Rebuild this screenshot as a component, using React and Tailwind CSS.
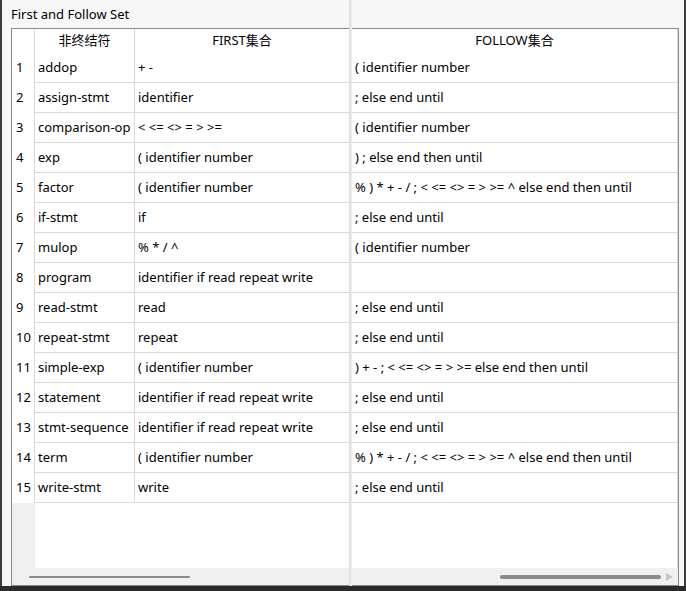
const rows = [
  ["addop", "+ -", "( identifier number"],
  ["assign-stmt", "identifier", "; else end until"],
  ["comparison-op", "< <= <> = > >=", "( identifier number"],
  ["exp", "( identifier number", ") ; else end then until"],
  ["factor", "( identifier number", "% ) * + - / ; < <= <> = > >= ^ else end then until"],
  ["if-stmt", "if", "; else end until"],
  ["mulop", "% * / ^", "( identifier number"],
  ["program", "identifier if read repeat write", ""],
  ["read-stmt", "read", "; else end until"],
  ["repeat-stmt", "repeat", "; else end until"],
  ["simple-exp", "( identifier number", ") + - ; < <= <> = > >= else end then until"],
  ["statement", "identifier if read repeat write", "; else end until"],
  ["stmt-sequence", "identifier if read repeat write", "; else end until"],
  ["term", "( identifier number", "% ) * + - / ; < <= <> = > >= ^ else end then until"],
  ["write-stmt", "write", "; else end until"],
];

export default function App() {
  return (
    <div
      className="w-[686px] h-[591px] bg-[#2b2b2b] flex flex-col overflow-hidden text-[13px] text-black"
      style={{ fontFamily: '"Noto Sans", "Noto Sans CJK SC", sans-serif' }}
    >
      <div className="flex h-[586px]">
        <div className="w-[2px] bg-[#3c3c3c]" />

        {/* Left window: first sets */}
        <div className="w-[347px] bg-[#f7f7f7] flex flex-col">
          <div className="h-[28px] pl-[9px] flex items-center leading-none">
            First and Follow Set
          </div>
          <div className="flex-1 ml-[9px] border-l border-t border-b border-[#8a8a8a] flex flex-col bg-white min-h-0">
            {/* Header */}
            <div className="h-[24px] flex shrink-0">
              <div className="w-[23px] border-r border-[#d9d9d9]" />
              <div className="w-[100px] border-r border-[#d9d9d9] flex items-center justify-center">
                非终结符
              </div>
              <div className="flex-1 flex items-center justify-center">FIRST集合</div>
            </div>

            {/* Rows */}
            {rows.map((r, i) => (
              <div key={r[0]} className="h-[30px] flex shrink-0">
                <div className="w-[23px] border-r border-[#d9d9d9] flex items-center pl-[4px] pb-[1px]">
                  {i + 1}
                </div>
                <div className="w-[100px] border-r border-b border-[#d9d9d9] flex items-center pl-[3px] whitespace-nowrap">
                  {r[0]}
                </div>
                <div className="flex-1 border-b border-[#d9d9d9] flex items-center pl-[3px] whitespace-nowrap">
                  {r[1]}
                </div>
              </div>
            ))}

            <div className="flex-1 flex">
              <div className="w-[23px] bg-[#f0f0f0]" />
            </div>

            {/* Scrollbar */}
            <div className="h-[17px] bg-[#f0f0f0] flex items-center shrink-0">
              <div className="ml-[17px] w-[161px] h-[2px] rounded-full bg-[#8a8a8a]" />
            </div>
          </div>
        </div>

        {/* shadow edge */}
        <div className="w-[3px] bg-gradient-to-r from-[#dadada] to-[#efefef]" />

        {/* Right window: follow sets */}
        <div className="flex-1 bg-[#f7f7f7] flex flex-col">
          <div className="h-[28px] shrink-0" />
          <div className="flex-1 w-[327px] border-t border-r border-b border-[#8a8a8a] bg-white flex flex-col min-h-0">
            <div className="h-[24px] flex items-center justify-center border-r border-[#d9d9d9] shrink-0">
              FOLLOW集合
            </div>
            {rows.map((r) => (
              <div
                key={r[0]}
                className="h-[30px] flex items-center pl-[3px] border-r border-b border-[#d9d9d9] whitespace-nowrap shrink-0"
              >
                {r[2]}
              </div>
            ))}
            <div className="flex-1 border-r border-[#d9d9d9]" />
            <div className="h-[17px] bg-[#f0f0f0] flex items-center shrink-0">
              <div className="ml-[148px] w-[161px] h-[4px] rounded-full bg-[#8a8a8a]" />
              <svg width="7" height="8" viewBox="0 0 7 8" className="ml-[5px]">
                <path d="M0 0 L7 4 L0 8 Z" fill="#c6c6c6" />
              </svg>
            </div>
          </div>
        </div>

        <div className="w-[2px] bg-[#3c3c3c]" />
      </div>
    </div>
  );
}
